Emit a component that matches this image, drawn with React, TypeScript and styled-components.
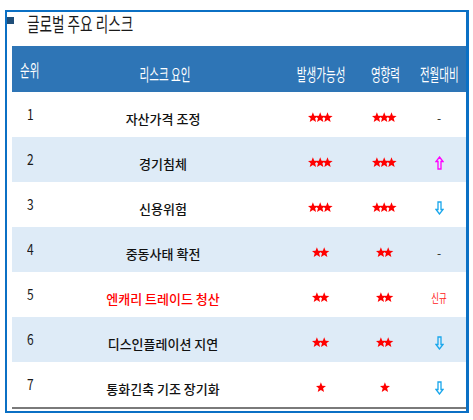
import React from "react";
import styled, { createGlobalStyle } from "styled-components";

const GlobalStyle = createGlobalStyle`
  html, body { margin: 0; padding: 0; background: #ffffff; }
  body { font-family: "Noto Sans CJK KR", "Noto Sans", sans-serif; }
`;

const Frame = styled.div`
  box-sizing: border-box;
  margin: 10px 0 0 5px;
  width: 464px;
  height: 403px;
  border: 2px solid #0b70c4;
  border-right-width: 3px;
  display: flex;
  flex-direction: column;
`;

const TitleBar = styled.div`
  height: 34px;
  display: flex;
  align-items: flex-start;
  padding-top: 5px;
  box-sizing: border-box;
`;

const TitleMark = styled.div`
  width: 7px;
  height: 7px;
  background: #1f4e79;
  flex: none;
`;

const TitleText = styled.span`
  display: inline-block;
  margin-left: 13px;
  margin-top: -5px;
  font-size: 20px;
  line-height: 24px;
  color: #1a1a1a;
  transform: scaleX(0.68);
  transform-origin: left center;
  white-space: nowrap;
`;

const Table = styled.div`
  margin-left: 5px;
  width: 454px;
  display: grid;
  grid-template-columns: 58px 220px 62px 66px 48px;
  border-bottom: 2px solid #7a7a7a;
`;

const HeadCell = styled.div<{ $align?: "left" | "center"; $lift?: number; $padL?: number; $padR?: number }>`
  height: 46px;
  min-width: 0;
  background: #2e75b6;
  color: #ffffff;
  display: flex;
  align-items: center;
  justify-content: ${(p) => (p.$align === "left" ? "flex-start" : "center")};
  padding-left: ${(p) => p.$padL ?? 0}px;
  padding-right: ${(p) => p.$padR ?? 0}px;
  padding-top: ${(p) => (p.$lift ? 0 : 8)}px;
  box-sizing: border-box;
  font-size: 17px;
  white-space: nowrap;
  overflow: visible;
`;

const Squeeze = styled.span<{ $origin?: string; $scale?: number }>`
  display: inline-block;
  transform: scaleX(${(p) => p.$scale ?? 0.62});
  transform-origin: ${(p) => p.$origin ?? "center"} center;
  white-space: nowrap;
`;

const Cell = styled.div<{ $shade: boolean; $padL?: number; $padR?: number; $shift?: number; $align?: "left" | "center" }>`
  height: 45px;
  min-width: 0;
  box-sizing: border-box;
  background: ${(p) => (p.$shade ? "#deebf7" : "#ffffff")};
  display: flex;
  align-items: center;
  justify-content: ${(p) => (p.$align === "left" ? "flex-start" : "center")};
  padding-left: ${(p) => p.$padL ?? 0}px;
  padding-right: ${(p) => p.$padR ?? 0}px;
  padding-top: ${(p) => Math.max(p.$shift ?? 0, 0)}px;
  padding-bottom: ${(p) => Math.max(-(p.$shift ?? 0), 0)}px;
`;

const RankText = styled.span`
  font-size: 15px;
  color: #1a1a1a;
  transform: scaleX(0.8);
  transform-origin: left center;
  display: inline-block;
`;

const NameText = styled.span<{ $red?: boolean }>`
  font-size: 13px;
  font-weight: 500;
  color: ${(p) => (p.$red ? "#ff0000" : "#111111")};
  white-space: nowrap;
`;

const Dash = styled.span`
  font-size: 12px;
  color: #222;
`;

const NewText = styled.span`
  display: inline-block;
  font-size: 12px;
  color: #ff2020;
  transform: scaleX(0.7);
`;

const Star = ({ x }: { x: number }) => {
  const pts: string[] = [];
  for (let i = 0; i < 10; i++) {
    const r = i % 2 === 0 ? 5.4 : 2.3;
    const a = -Math.PI / 2 + (i * Math.PI) / 5;
    pts.push(`${(x + 5.4 + r * Math.cos(a)).toFixed(2)},${(5.6 + r * Math.sin(a)).toFixed(2)}`);
  }
  return <polygon points={pts.join(" ")} fill="#ff0000" />;
};

const Stars = ({ n }: { n: number }) => {
  const w = n * 7.3 + 3.5;
  return (
    <svg width={w} height={11} viewBox={`0 0 ${w} 11`}>
      {Array.from({ length: n }).map((_, i) => (
        <Star key={i} x={i * 7.3 - 0.5} />
      ))}
    </svg>
  );
};

const Arrow = ({ dir }: { dir: "up" | "down" }) => {
  const color = dir === "up" ? "#ff00ff" : "#1aa7ec";
  const d = "M4.5 1 L8 5.5 L6 5.5 L6 13 L3 13 L3 5.5 L1 5.5 Z";
  return (
    <svg width="9" height="14" viewBox="0 0 9 14">
      <path
        d={d}
        fill="none"
        stroke={color}
        strokeWidth="1.3"
        strokeLinejoin="miter"
        transform={dir === "down" ? "rotate(180 4.5 7)" : undefined}
      />
    </svg>
  );
};

type Change = "none" | "up" | "down" | "new";
type Row = { rank: number; name: string; prob: number; impact: number; change: Change; red?: boolean };

const rows: Row[] = [
  { rank: 1, name: "자산가격 조정", prob: 3, impact: 3, change: "none" },
  { rank: 2, name: "경기침체", prob: 3, impact: 3, change: "up" },
  { rank: 3, name: "신용위험", prob: 3, impact: 3, change: "down" },
  { rank: 4, name: "중동사태 확전", prob: 2, impact: 2, change: "none" },
  { rank: 5, name: "엔캐리 트레이드 청산", prob: 2, impact: 2, change: "new", red: true },
  { rank: 6, name: "디스인플레이션 지연", prob: 2, impact: 2, change: "down" },
  { rank: 7, name: "통화긴축 기조 장기화", prob: 1, impact: 1, change: "down" },
];

const ChangeMark = ({ c }: { c: Change }) => {
  if (c === "up") return <Arrow dir="up" />;
  if (c === "down") return <Arrow dir="down" />;
  if (c === "new") return <NewText>신규</NewText>;
  return <Dash>-</Dash>;
};

export default function App() {
  return (
    <>
      <GlobalStyle />
      <Frame>
        <TitleBar>
          <TitleMark />
          <TitleText>글로벌 주요 리스크</TitleText>
        </TitleBar>
        <Table>
          <HeadCell $align="left" $padL={8} $lift={1}>
            <Squeeze $origin="left">순위</Squeeze>
          </HeadCell>
          <HeadCell $padR={30}>
            <Squeeze>리스크 요인</Squeeze>
          </HeadCell>
          <HeadCell>
            <Squeeze>발생가능성</Squeeze>
          </HeadCell>
          <HeadCell>
            <Squeeze>영향력</Squeeze>
          </HeadCell>
          <HeadCell $padR={6}>
            <Squeeze>전월대비</Squeeze>
          </HeadCell>
          {rows.map((r, i) => {
            const shade = i % 2 === 1;
            return (
              <React.Fragment key={r.rank}>
                <Cell $shade={shade} $align="left" $padL={15} $shift={-3}>
                  <RankText>{r.rank}</RankText>
                </Cell>
                <Cell $shade={shade} $padR={34} $shift={7}>
                  <NameText $red={r.red}>{r.name}</NameText>
                </Cell>
                <Cell $shade={shade} $shift={6}>
                  <Stars n={r.prob} />
                </Cell>
                <Cell $shade={shade} $shift={6}>
                  <Stars n={r.impact} />
                </Cell>
                <Cell $shade={shade} $padR={6} $shift={6}>
                  <ChangeMark c={r.change} />
                </Cell>
              </React.Fragment>
            );
          })}
        </Table>
      </Frame>
    </>
  );
}
